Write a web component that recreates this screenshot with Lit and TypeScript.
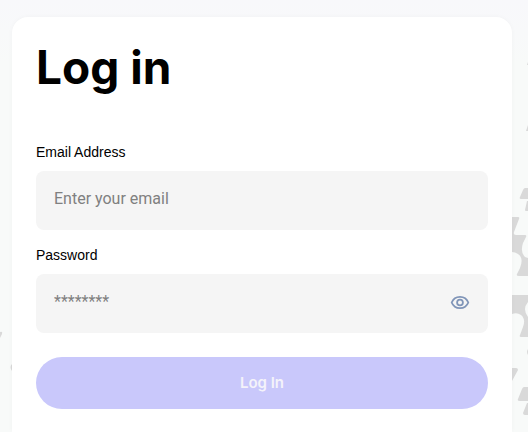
import { LitElement, html, css } from "lit";
import { customElement, state } from "lit/decorators.js";

@customElement("app-root")
export class AppRoot extends LitElement {
  @state() private revealed = false;

  static styles = css`
    :host {
      display: block;
      font-family: "Liberation Sans", Arial, sans-serif;
      color: #000;
    }
    * {
      box-sizing: border-box;
    }
    .page {
      position: relative;
      display: flex;
      min-height: 100vh;
      padding: 17px 16px 0 12px;
      overflow: hidden;
      background: linear-gradient(#f8f8fb, #f8faf9 64px);
    }
    .art {
      position: absolute;
      top: 0;
      fill: #d9d9d9;
    }
    .art.left {
      left: 0;
    }
    .art.right {
      right: 0;
    }
    .card {
      position: relative;
      flex: 1;
      padding: 23px 24px;
      border-radius: 16px 16px 0 0;
      background: #fff;
      box-shadow: 0 0 5px rgba(0, 30, 10, 0.03);
    }
    h1 {
      margin: 0 0 50px;
      font: 700 46px/54px Inter, sans-serif;
    }
    form {
      display: flex;
      flex-direction: column;
    }
    label {
      margin-bottom: 11px;
      font-size: 14px;
      line-height: 16px;
    }
    .field {
      display: flex;
      align-items: center;
      height: 59px;
      margin-bottom: 17px;
      padding: 0 18px;
      border-radius: 8px;
      background: #f5f5f5;
    }
    input {
      flex: 1;
      min-width: 0;
      height: 100%;
      padding: 0 0 4px;
      border: 0;
      outline: 0;
      background: none;
      font: 16px Roboto, sans-serif;
    }
    input::placeholder {
      color: #808080;
      opacity: 1;
    }
    .reveal {
      display: flex;
      padding: 0;
      border: 0;
      background: none;
    }
    .submit {
      height: 52px;
      margin-top: 7px;
      border: 0;
      border-radius: 26px;
      background: #c9c8fb;
      color: #f4f3fa;
      font: 600 15px/20px Inter, sans-serif;
    }
  `;

  render() {
    return html`
      <main class="page">
        <svg class="art left" width="14" height="432" aria-hidden="true">
          <path d="M0 332Q3 331 2 334L0 338ZM12 364Q9 367 12 371Z" />
        </svg>
        <svg class="art right" width="16" height="432" aria-hidden="true">
          <path
            d="M16 62L15 65H16ZM16 125L14 131H16Z
              M16 188H13Q12 188 11 190L8 197Q7 199 9 199H16Z
              M16 201H15L13 210Q13 211 14 211H16Z
              M0 217H6Q8 217 7 219L2 232Q1 235 4 235H13Q15 235 14 237L11 243Q8 252 13 257L16 258V276H7Q4 276 5 274L8 268Q12 258 6 254Q3 252 0 252Z
              M0 295H16V302Q10 309 16 317V337H9Q7 337 8 335L11 327Q14 319 9 315Q5 312 0 314Z
              M16 349Q14 352 16 355Z
              M0 368H4Q6 368 6 370L0 381Z
              M16 387H12Q11 387 10 389L6 399Q5 401 8 401H16Z
              M16 403H15L11 413Q11 415 13 415H16Z"
          />
        </svg>
        <section class="card">
          <h1>Log in</h1>
          <form @submit=${(e: Event) => e.preventDefault()}>
            <label for="email">Email Address</label>
            <div class="field">
              <input id="email" type="email" placeholder="Enter your email" />
            </div>
            <label for="password">Password</label>
            <div class="field">
              <input
                id="password"
                type=${this.revealed ? "text" : "password"}
                placeholder="********"
              />
              <button
                class="reveal"
                type="button"
                aria-label="Show password"
                @click=${() => (this.revealed = !this.revealed)}
              >
                <svg width="20" height="20" viewBox="0 1 20 20" fill="none" stroke="#8095b8" stroke-width="1.8">
                  <path d="M1.7 9.500C3.200 5.700 6.300 3.800 10 3.800s6.800 1.900 8.300 5.700c-1.500 3.800-4.600 5.700-8.300 5.700S3.200 13.300 1.700 9.500Z" />
                  <circle cx="10" cy="9.500" r="2.900" />
                </svg>
              </button>
            </div>
            <button class="submit" type="submit" disabled>Log In</button>
          </form>
        </section>
      </main>
    `;
  }
}
